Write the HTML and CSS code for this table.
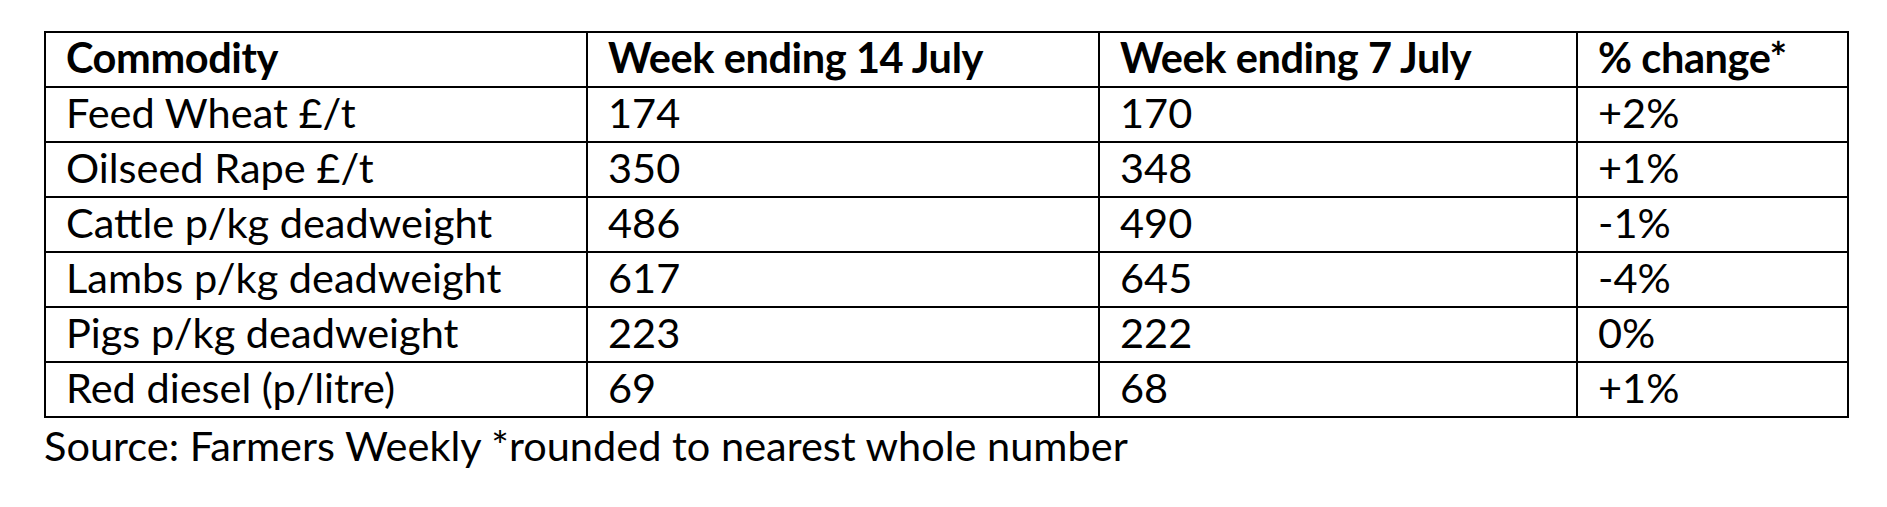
FILE: index.html
```html
<!DOCTYPE html>
<html>
<head>
<meta charset="utf-8">
<link rel="stylesheet" href="styles.css">
</head>
<body>
<div class="wrap">
<table class="prices">
  <colgroup>
    <col class="c1"><col class="c2"><col class="c3"><col class="c4">
  </colgroup>
  <thead>
    <tr><th>Commodity</th><th>Week ending 14 July</th><th>Week ending 7 July</th><th>% change*</th></tr>
  </thead>
  <tbody>
    <tr><td>Feed Wheat £/t</td><td>174</td><td>170</td><td>+2%</td></tr>
    <tr><td>Oilseed Rape £/t</td><td>350</td><td>348</td><td>+1%</td></tr>
    <tr><td>Cattle p/kg deadweight</td><td>486</td><td>490</td><td>-1%</td></tr>
    <tr><td>Lambs p/kg deadweight</td><td>617</td><td>645</td><td>-4%</td></tr>
    <tr><td>Pigs p/kg deadweight</td><td>223</td><td>222</td><td>0%</td></tr>
    <tr><td>Red diesel (p/litre)</td><td>69</td><td>68</td><td>+1%</td></tr>
  </tbody>
</table>
<p class="source">Source: Farmers Weekly *rounded to nearest whole number</p>
</div>
</body>
</html>
```
FILE: styles.css
```css
html, body {
  margin: 0;
  padding: 0;
  background: #ffffff;
}
body {
  font-family: Lato, "Open Sans", "Liberation Sans", sans-serif;
  color: #000000;
}
.wrap {
  padding: 31px 0 0 44px;
}
.prices {
  border-collapse: collapse;
  table-layout: fixed;
  width: 1803px;
}
.c1 { width: 542px; }
.c2 { width: 512px; }
.c3 { width: 478px; }
.c4 { width: 271px; }
.prices th,
.prices td {
  border: 2px solid #000000;
  height: 55px;
  box-sizing: border-box;
  padding: 0 18px 6px 20px;
  vertical-align: middle;
  text-align: left;
  font-size: 41.5px;
  line-height: 44px;
  white-space: nowrap;
}
.prices th {
  font-weight: 700;
  letter-spacing: -0.4px;
}
.prices td {
  font-weight: 400;
}
.source {
  margin: 0;
  padding-top: 2px;
  font-size: 41.5px;
  line-height: 50px;
}
```
